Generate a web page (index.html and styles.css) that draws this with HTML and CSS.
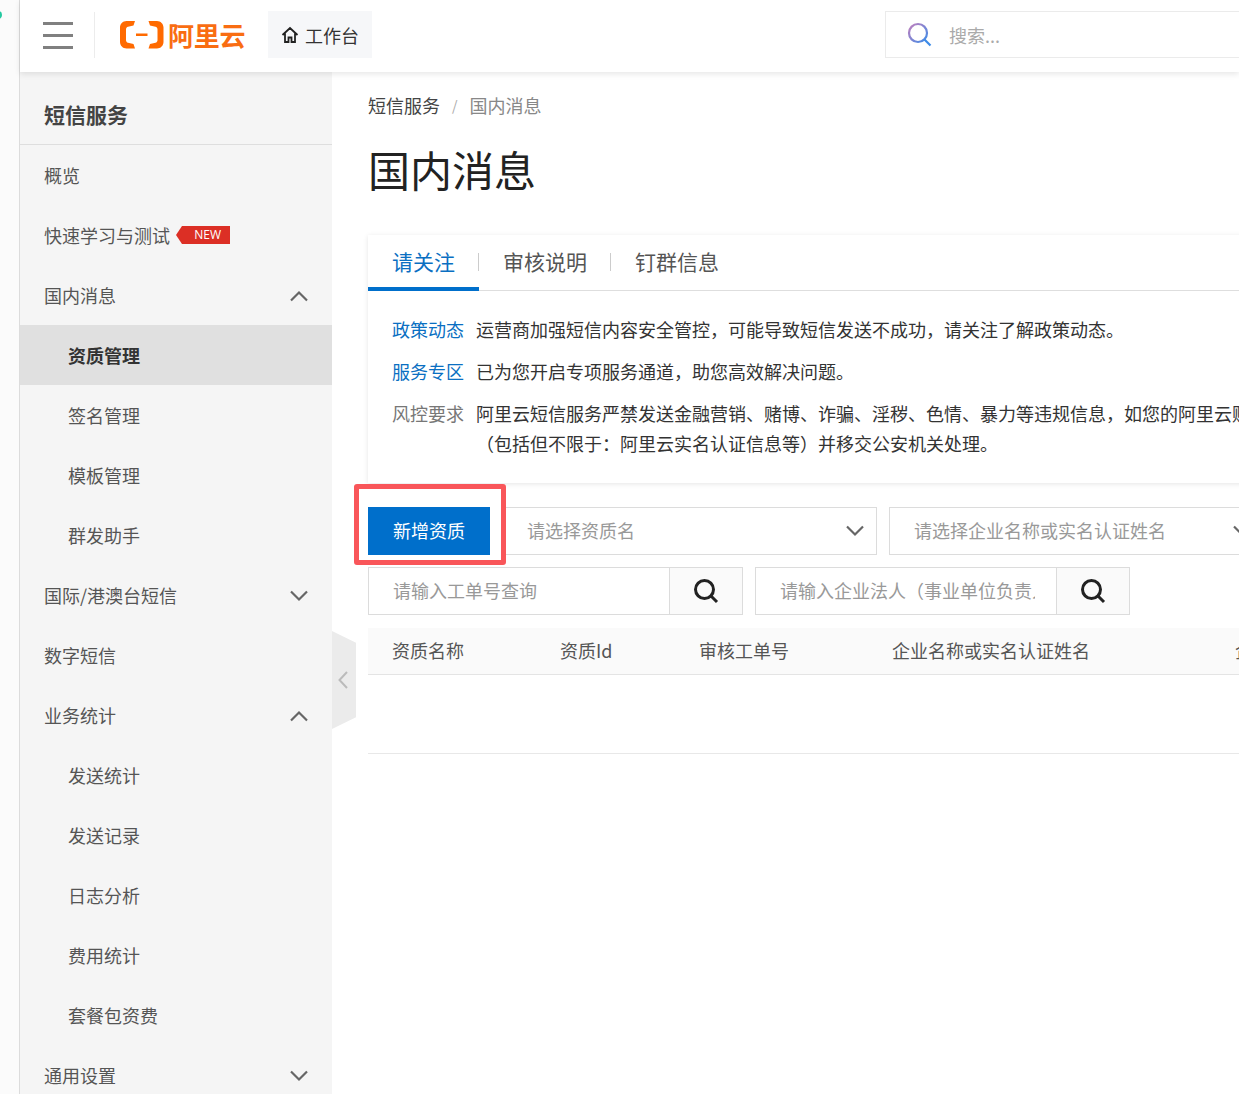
FILE: index.html
```html
<!DOCTYPE html>
<html lang="zh-CN">
<head>
<meta charset="utf-8">
<title>国内消息</title>
<link rel="stylesheet" href="styles.css">
</head>
<body>
<div class="app">
  <div class="strip"><span class="dot"></span></div>
  <div class="shell">
    <header class="topbar">
      <div class="burger"><i></i><i></i><i></i></div>
      <div class="logo">
        <svg class="logo-mark" width="44" height="28" viewBox="0 0 44 28"><path fill="#ff6a00" d="M15 0H6.500C2.900 0 0 2.900 0 6.500v14.500C0 24.600 2.900 27.500 6.500 27.500H15l-1.500-4.500-5.500-1.300C6.800 21.400 6 20.400 6 19.200V8.300C6 7.100 6.800 6.100 8 5.800l5.500-1.300zM28.500 0H37c3.600 0 6.500 2.900 6.500 6.500v14.500c0 3.600-2.900 6.500-6.500 6.500h-8.500l1.500-4.500 5.500-1.300c1.200-.3 2-1.300 2-2.500V8.300c0-1.200-.8-2.200-2-2.500L30 4.500zM16 12.600h11.500v2.500H16z"/></svg>
        <span class="logo-text">阿里云</span>
      </div>
      <a class="workbench">
        <svg width="18" height="18" viewBox="0 0 18 18" fill="none" stroke="#222" stroke-width="1.800"><path d="M1.500 9 9 2l7.500 7M4 7.500V16h3.500v-4.500h3V16H14V7.500"/></svg>
        <span>工作台</span>
      </a>
      <div class="global-search">
        <svg width="26" height="26" viewBox="0 0 26 26" fill="none"><defs><linearGradient id="sg" x1="0" y1="0" x2="1" y2="1"><stop offset="0" stop-color="#c27fbd"/><stop offset="1" stop-color="#3d8be8"/></linearGradient></defs><circle cx="11" cy="11" r="9" stroke="url(#sg)" stroke-width="2.200"/><path d="m17.500 17.500 6 6" stroke="#3d8be8" stroke-width="2.200"/></svg>
        <span>搜索...</span>
      </div>
    </header>
    <div class="body">
      <nav class="sidebar">
        <div class="side-title">短信服务</div>
        <ul class="menu">
          <li class="item">概览</li>
          <li class="item">快速学习与测试<span class="new">NEW</span></li>
          <li class="item">国内消息<svg class="chev" width="20" height="12" viewBox="0 0 20 12"><path d="M2 10.500 10 2.500l8 8"/></svg></li>
          <li class="item sub active">资质管理</li>
          <li class="item sub">签名管理</li>
          <li class="item sub">模板管理</li>
          <li class="item sub">群发助手</li>
          <li class="item">国际/港澳台短信<svg class="chev" width="20" height="12" viewBox="0 0 20 12"><path d="M2 1.500l8 8 8-8"/></svg></li>
          <li class="item">数字短信</li>
          <li class="item">业务统计<svg class="chev" width="20" height="12" viewBox="0 0 20 12"><path d="M2 10.500 10 2.500l8 8"/></svg></li>
          <li class="item sub">发送统计</li>
          <li class="item sub">发送记录</li>
          <li class="item sub">日志分析</li>
          <li class="item sub">费用统计</li>
          <li class="item sub">套餐包资费</li>
          <li class="item">通用设置<svg class="chev" width="20" height="12" viewBox="0 0 20 12"><path d="M2 1.500l8 8 8-8"/></svg></li>
        </ul>
      </nav>
      <main class="main">
        <div class="collapse"><svg width="12" height="20" viewBox="0 0 12 20"><path d="M10 2 2.500 10l7.500 8"/></svg></div>
        <div class="crumbs"><span class="crumb-link">短信服务</span><span class="crumb-sep">/</span><span class="crumb-cur">国内消息</span></div>
        <h1 class="page-title">国内消息</h1>
        <section class="notice">
          <div class="tabs">
            <span class="tab on">请关注</span>
            <span class="tab">审核说明</span>
            <span class="tab last">钉群信息</span>
          </div>
          <div class="notice-body">
            <div class="note"><span class="note-label link">政策动态</span><span class="note-text">运营商加强短信内容安全管控，可能导致短信发送不成功，请关注了解政策动态。</span></div>
            <div class="note"><span class="note-label link">服务专区</span><span class="note-text">已为您开启专项服务通道，助您高效解决问题。</span></div>
            <div class="note"><span class="note-label">风控要求</span><span class="note-text">阿里云短信服务严禁发送金融营销、赌博、诈骗、淫秽、色情、暴力等违规信息，如您的阿里云账号存在违规行为，将冻结账号<br>（包括但不限于：阿里云实名认证信息等）并移交公安机关处理。</span></div>
          </div>
        </section>
        <div class="filters">
          <div class="add-wrap">
            <button class="add">新增资质</button>
            <span class="marker"></span>
          </div>
          <div class="select"><span>请选择资质名</span><svg class="chev" width="20" height="12" viewBox="0 0 20 12"><path d="M2 1.500l8 8 8-8"/></svg></div>
          <div class="select"><span>请选择企业名称或实名认证姓名</span><svg class="chev" width="20" height="12" viewBox="0 0 20 12"><path d="M2 1.500l8 8 8-8"/></svg></div>
        </div>
        <div class="filters second">
          <div class="search one"><span class="ph">请输入工单号查询</span><span class="sbtn"><svg width="26" height="26" viewBox="0 0 26 26" fill="none" stroke="#222" stroke-width="3"><circle cx="11.500" cy="11.500" r="9"/><path d="m18 18 6 6"/></svg></span></div>
          <div class="search two"><span class="ph">请输入企业法人（事业单位负责人）</span><span class="sbtn"><svg width="26" height="26" viewBox="0 0 26 26" fill="none" stroke="#222" stroke-width="3"><circle cx="11.500" cy="11.500" r="9"/><path d="m18 18 6 6"/></svg></span></div>
        </div>
        <div class="table">
          <div class="thead">
            <span>资质名称</span><span>资质Id</span><span>审核工单号</span><span>企业名称或实名认证姓名</span><span>企业证件</span>
          </div>
          <div class="tempty"></div>
        </div>
      </main>
    </div>
  </div>
</div>
</body>
</html>
```
FILE: styles.css
```css
* { box-sizing: border-box; }
html, body { margin: 0; padding: 0; height: 100%; overflow: hidden; background: #fff; }
body { font-family: "Noto Sans CJK SC", "Liberation Sans", sans-serif; color: #333; font-size: 18px; }
.app { display: flex; width: 1239px; height: 1094px; overflow: hidden; }
.strip { width: 20px; flex: none; background: #fbfbfb; border-right: 1px solid #dcdcdc; position: relative; }
.dot { position: absolute; left: -6px; top: 11px; width: 8px; height: 8px; border-radius: 50%; background: #23c9a0; }
.shell { flex: 1; min-width: 0; display: flex; flex-direction: column; }
.topbar { height: 72px; flex: none; display: flex; align-items: center; padding-bottom: 3px; background: #fff; box-shadow: 0 2px 6px rgba(0,0,0,.1); position: relative; z-index: 2; }
.burger { width: 30px; margin: 2px 0 0 23px; display: flex; flex-direction: column; gap: 9px; }
.burger i { display: block; height: 3px; background: #808080; }
.logo { margin-left: 21px; padding-left: 25px; height: 46px; border-left: 1px solid #ececec; display: flex; align-items: center; }
.logo-mark { display: block; }
.logo-text { margin-left: 4px; font-size: 26px; line-height: 32px; color: #f96d12; font-weight: 700; letter-spacing: -.3px; }
.workbench { margin-left: 23px; width: 104px; height: 47px; background: #f6f7f9; display: flex; align-items: center; justify-content: center; gap: 6px; color: #333; font-size: 18px; }
.global-search { margin-left: auto; width: 354px; height: 47px; margin-right: 0; border: 1px solid #ebebeb; border-right: 0; display: flex; align-items: center; padding-left: 21px; gap: 16px; color: #aaa; font-size: 18px; }
.body { flex: 1; min-height: 0; display: flex; }
.sidebar { width: 312px; flex: none; background: #f5f5f5; overflow: hidden; }
.side-title { height: 73px; border-bottom: 1px solid #dedede; padding: 12px 24px 0; display: flex; align-items: center; font-size: 21px; font-weight: 700; color: #444; }
.menu { list-style: none; margin: 0; padding: 0; }
.item { height: 60px; padding: 0 23px 1px 24px; display: flex; align-items: center; position: relative; color: #555; font-size: 18px; }
.item.sub { padding-left: 48px; }
.item.active { background: #e0e0e0; font-weight: 700; color: #333; }
.chev { fill: none; stroke: #666; stroke-width: 2.200; }
.item .chev { margin: 2px 0 0 auto; }
.new { position: relative; margin-left: 12px; height: 18px; width: 48px; background: #dc2f25; color: #fff; font-size: 12px; line-height: 18px; text-align: right; padding-right: 9px; font-family: "Open Sans", sans-serif; }
.new::before { content: ""; position: absolute; left: -6px; top: 0; border-style: solid; border-width: 9px 6px 9px 0; border-color: transparent #dc2f25 transparent transparent; }
.main { flex: 1; min-width: 0; position: relative; padding-left: 36px; }
.collapse { position: absolute; left: 0; top: 559px; width: 24px; height: 98px; background: #ebebeb; clip-path: polygon(0 0, 100% 12%, 100% 88%, 0 100%); display: flex; align-items: center; justify-content: center; padding-right: 2px; }
.collapse path { fill: none; stroke: #bbb; stroke-width: 2; }
.crumbs { margin-top: 19px; height: 28px; display: flex; align-items: center; line-height: 28px; white-space: nowrap; }
.crumb-link { color: #444; }
.crumb-sep { margin: 0 12px; color: #aaa; font-size: 14px; }
.crumb-cur { color: #888; }
.page-title { margin: 21px 0 0; height: 64px; font-size: 42px; line-height: 58px; font-weight: 400; color: #222; }
.notice { margin-top: 31px; width: 920px; height: 248px; background: #fff; box-shadow: 0 1px 5px rgba(0,0,0,.1); }
.tabs { height: 56px; display: flex; border-bottom: 1px solid #dedede; }
.tab { position: relative; padding: 0 24px; height: 56px; line-height: 52px; font-size: 21px; color: #555; }
.tab:not(.last):not(.on)::after, .tab.on::after { content: ""; position: absolute; right: 0; top: 18px; height: 18px; width: 1px; background: #ccc; }
.tab.on { color: #0a6fc2; border-bottom: 4px solid #006fcb; }
.notice-body { padding: 23px 0 0 24px; }
.note { display: flex; gap: 12px; margin-bottom: 12px; line-height: 30px; white-space: nowrap; }
.note-label { color: #777; flex: none; }
.note-label.link { color: #0a6fc2; }
.note-text { color: #333; }
.filters { margin-top: 24px; display: flex; gap: 12px; white-space: nowrap; }
.filters.second { margin-top: 12px; }
.add-wrap { position: relative; flex: none; }
.add { display: block; width: 122px; height: 48px; border: 0; background: #006fcb; color: #fff; font: inherit; padding: 0 0 2px; }
.marker { position: absolute; left: -14px; top: -23px; width: 152px; height: 81px; border: 5px solid #f9565a; border-radius: 3px; pointer-events: none; }
.select { flex: none; width: 375px; height: 48px; border: 1px solid #dcdcdc; display: flex; align-items: center; justify-content: space-between; padding: 0 11px 0 24px; color: #999; background: #fff; }
.select span { margin-bottom: 2px; }
.search { flex: none; height: 48px; border: 1px solid #dcdcdc; display: flex; align-items: stretch; color: #999; }
.search.one { width: 375px; }
.search.two { width: 375px; }
.ph { flex: 1; min-width: 0; padding-left: 24px; line-height: 44px; overflow: hidden; white-space: nowrap; }
.search.two .ph { margin-right: 21px; }
.sbtn { flex: none; width: 73px; background: #fafafa; border-left: 1px solid #dcdcdc; display: flex; align-items: center; justify-content: center; }
.table { margin-top: 13px; width: 920px; }
.thead { height: 47px; display: grid; grid-template-columns: 168px 139px 193px 343px 1fr; padding: 0 0 2px 24px; align-items: center; background: #fafafa; border-bottom: 1px solid #e4e4e4; color: #555; white-space: nowrap; }
.tempty { height: 79px; border-bottom: 1px solid #e8e8e8; }
```
